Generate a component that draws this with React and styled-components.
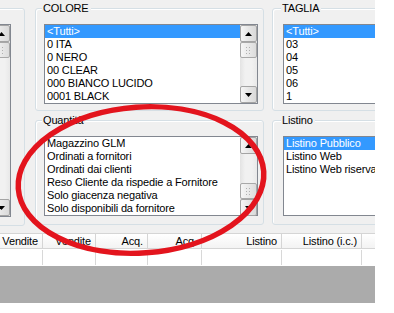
import React from "react";
import styled, { createGlobalStyle } from "styled-components";

const GlobalStyle = createGlobalStyle`
  html, body {
    margin: 0;
    padding: 0;
    background: #ffffff;
  }
  body {
    font-family: "Liberation Sans", Arial, sans-serif;
    font-size: 11px;
    letter-spacing: -0.15px;
  }
`;

const Screen = styled.div`
  width: 375px;
  height: 303px;
  background: #f0f0f0;
  position: relative;
  overflow: hidden;
  display: flex;
  flex-direction: column;
`;

const Panels = styled.div`
  display: flex;
  align-items: flex-start;
  margin-left: -140px;
  padding-top: 8px;
  height: 217px;
  flex-shrink: 0;
`;

const Column = styled.div`
  display: flex;
  flex-direction: column;
  gap: 9px;
  width: ${(p) => p.width}px;
  margin-left: ${(p) => p.gap || 0}px;
  flex-shrink: 0;
`;

const GroupBox = styled.div`
  border: 1px solid #d5dfe5;
  border-radius: 3px;
  height: ${(p) => p.height}px;
  box-sizing: border-box;
  display: flex;
  flex-direction: column;
  padding: 0 ${(p) => p.padRight || 5}px 0 ${(p) => p.padLeft || 8}px;
  box-shadow: inset 1px 1px 0 #ffffff;
`;

const Legend = styled.div`
  align-self: flex-start;
  margin: -7px 0 0 -2px;
  padding: 0 2px 0 1px;
  height: 13px;
  line-height: 13px;
  background: #f0f0f0;
  color: #000;
  white-space: nowrap;
`;

const ListBox = styled.div`
  margin-top: 9px;
  height: ${(p) => p.height || 80}px;
  box-sizing: border-box;
  border: 1px solid #828790;
  background: #ffffff;
  display: flex;
`;

const Items = styled.div`
  flex: 1;
  min-width: 0;
  overflow: hidden;
`;

const Item = styled.div`
  height: 13px;
  line-height: 13px;
  padding-left: 2px;
  white-space: nowrap;
  color: ${(p) => (p.selected ? "#ffffff" : "#000000")};
  background: ${(p) => (p.selected ? "#3399ff" : "transparent")};
`;

const ScrollBar = styled.div`
  width: 17px;
  flex-shrink: 0;
  display: flex;
  flex-direction: column;
  background: linear-gradient(to right, #e3e3e3, #f1f1f1 30%, #f1f1f1 70%, #e8e8e8);
`;

const ScrollButton = styled.div`
  height: 17px;
  box-sizing: border-box;
  border: 1px solid #a4a4a4;
  border-radius: 2px;
  background: linear-gradient(to right, #f6f6f6, #e6e6e6 50%, #d9d9d9);
  display: flex;
  align-items: center;
  justify-content: center;
  flex-shrink: 0;
`;

const Track = styled.div`
  flex: 1;
  display: flex;
  flex-direction: column;
`;

const Thumb = styled(ScrollButton)`
  height: 16px;
  margin-top: ${(p) => p.offset}px;
  border-color: #a8a8a8;
  background: linear-gradient(to right, #f6f6f6, #e9e9e9 50%, #dcdcdc);
`;

const Grip = styled.div`
  width: 7px;
  height: 8px;
  background-image: radial-gradient(circle, #b0b0b0 0.7px, transparent 0.9px);
  background-size: 3px 3px;
`;

const Arrow = ({ down }) => (
  <svg width="7" height="4" viewBox="0 0 7 4">
    <path d={down ? "M0 0H7L3.5 4Z" : "M0 4H7L3.5 0Z"} fill="#000" />
  </svg>
);

const Scroller = ({ thumb }) => (
  <ScrollBar>
    <ScrollButton>
      <Arrow />
    </ScrollButton>
    <Track>
      <Thumb offset={thumb}>
        <Grip />
      </Thumb>
    </Track>
    <ScrollButton>
      <Arrow down />
    </ScrollButton>
  </ScrollBar>
);

const List = ({ items, selected, scroll, height }) => (
  <ListBox height={height}>
    <Items>
      {items.map((t, i) => (
        <Item key={t} selected={i === selected}>
          {t}
        </Item>
      ))}
    </Items>
    {scroll !== undefined && <Scroller thumb={scroll} />}
  </ListBox>
);

const Table = styled.div`
  margin-top: 8px;
  flex-shrink: 0;
  margin-left: -10px;
`;

const Row = styled.div`
  display: flex;
  height: ${(p) => (p.header ? 16 : 17)}px;
  box-sizing: border-box;
  background: ${(p) => (p.header ? "linear-gradient(#ffffff, #f3f3f3)" : "#ffffff")};
  border-top: 1px solid ${(p) => (p.header ? "#d5d5d5" : "transparent")};
  border-bottom: 1px solid ${(p) => (p.header ? "#d5d5d5" : "#ffffff")};
`;

const Cell = styled.div`
  width: ${(p) => p.w}px;
  flex-shrink: 0;
  box-sizing: border-box;
  border-right: 1px solid ${(p) => (p.header ? "#d5d5d5" : "#d8d8d8")};
  text-align: right;
  padding-right: 4px;
  line-height: 14px;
  white-space: nowrap;
  overflow: hidden;
`;

const Workspace = styled.div`
  flex: 1;
  background: #ababab;
`;

const Annotation = styled.svg`
  position: absolute;
  left: 0;
  top: 0;
  pointer-events: none;
`;

const columns = [
  { t: "Vendite", w: 53 },
  { t: "Vendite", w: 53 },
  { t: "Acq.", w: 52 },
  { t: "Acq.", w: 54 },
  { t: "Listino", w: 80 },
  { t: "Listino (i.c.)", w: 80 },
  { t: "", w: 60 },
];

export default function App() {
  return (
    <>
      <GlobalStyle />
      <Screen>
        <Panels>
          <Column width={165}>
            <GroupBox height={218} padRight={13}>
              <Legend />
              <List items={[]} scroll={0} height={193} />
            </GroupBox>
          </Column>
          <Column width={229} gap={10}>
            <GroupBox height={103}>
              <Legend>COLORE</Legend>
              <List
                items={["<Tutti>", "0 ITA", "0 NERO", "00 CLEAR", "000 BIANCO LUCIDO", "0001 BLACK"]}
                selected={0}
                scroll={0}
              />
            </GroupBox>
            <GroupBox height={105}>
              <Legend>Quantità</Legend>
              <List
                items={[
                  "Magazzino GLM",
                  "Ordinati a fornitori",
                  "Ordinati dai clienti",
                  "Reso Cliente da rispedie a Fornitore",
                  "Solo giacenza negativa",
                  "Solo disponibili da fornitore",
                ]}
                scroll={29}
              />
            </GroupBox>
          </Column>
          <Column width={160} gap={8}>
            <GroupBox height={103} padLeft={10}>
              <Legend>TAGLIA</Legend>
              <List items={["<Tutti>", "03", "04", "05", "06", "1"]} selected={0} />
            </GroupBox>
            <GroupBox height={105} padLeft={10}>
              <Legend>Listino</Legend>
              <List
                items={["Listino Pubblico", "Listino Web", "Listino Web riservato"]}
                selected={0}
              />
            </GroupBox>
          </Column>
        </Panels>
        <Table>
          <Row header>
            {columns.map((c, i) => (
              <Cell key={i} w={c.w} header>
                {c.t}
              </Cell>
            ))}
          </Row>
          <Row>
            {columns.map((c, i) => (
              <Cell key={i} w={c.w} />
            ))}
          </Row>
        </Table>
        <Workspace />
        <Annotation width="375" height="303" viewBox="0 0 375 303">
          <ellipse
            cx="141"
            cy="180"
            rx="123"
            ry="73"
            fill="none"
            stroke="#e3141d"
            strokeWidth="5.5"
            transform="rotate(-4 141 180)"
          />
        </Annotation>
      </Screen>
    </>
  );
}
